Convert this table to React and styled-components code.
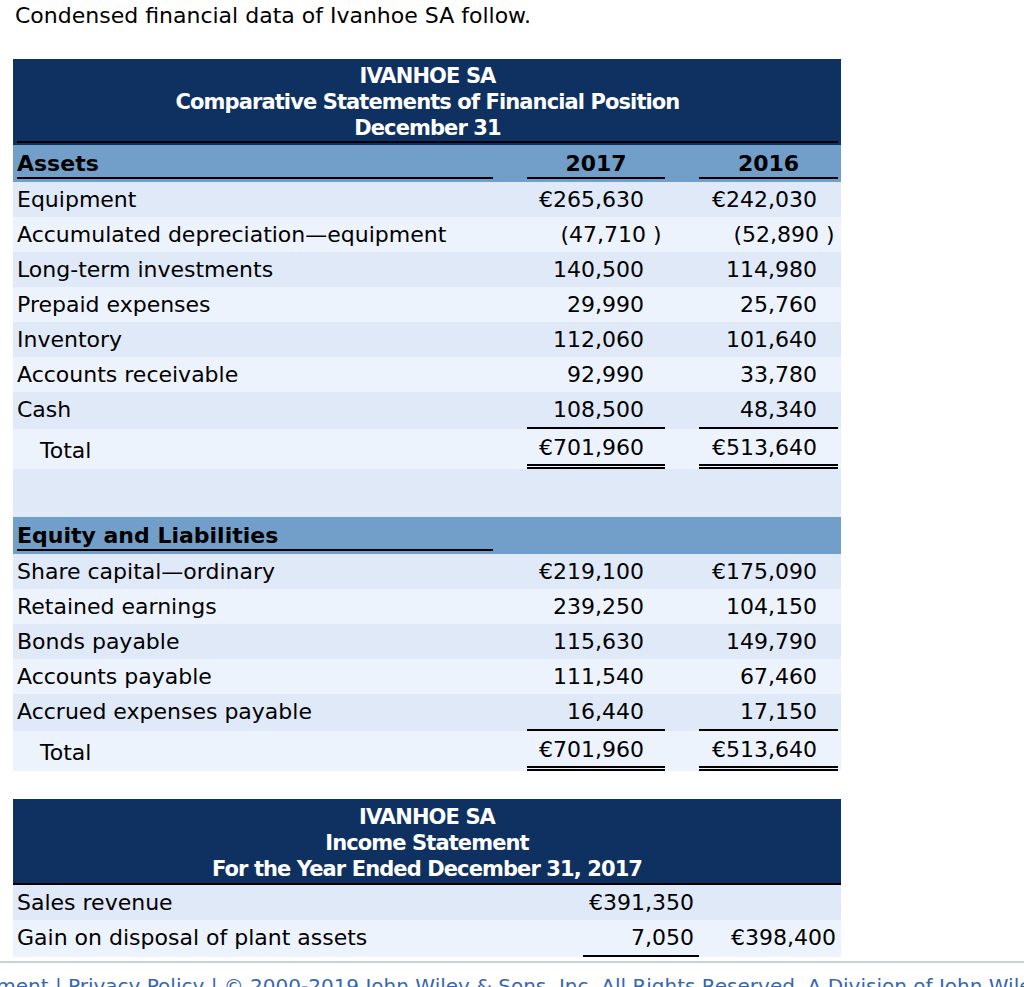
import React from 'react';
import styled, { createGlobalStyle } from 'styled-components';

const GlobalStyle = createGlobalStyle`
  body {
    margin: 0;
    background: #ffffff;
    color: #000000;
    font-family: 'DejaVu Sans', Verdana, sans-serif;
  }
`;

const Page = styled.div`
  padding: 3px 0 0 13px;
`;

const Title = styled.p`
  margin: 0 0 30px 2px;
  font-size: 22px;
  line-height: 26px;
`;

const Sheet = styled.div`
  width: 828px;
  display: flex;
  flex-direction: column;
  margin-bottom: ${(props) => props.$gap || 0}px;
`;

const Banner = styled.div`
  background: #0f3161;
  color: #ffffff;
  text-align: center;
  font-weight: bold;
  font-size: 21px;
  letter-spacing: -0.9px;
  line-height: 26px;
  padding: ${(props) => (props.$flush ? '5px 0 1px' : '4px 3px 2px 4px')};
  border-bottom: ${(props) => (props.$flush ? '2px solid #000' : 'none')};
`;

const BannerText = styled.div`
  border-bottom: ${(props) => (props.$ruled ? '2px solid #000' : 'none')};
`;

const Row = styled.div`
  display: grid;
  grid-template-columns: ${(props) => props.$cols || '476px 34px 138px 34px 139px'};
  padding: 0 3px 0 4px;
  font-size: 22px;
  background: ${(props) => (props.$tone === 'light' ? '#edf3fd' : '#e0e9f7')};
`;

const HeadRow = styled(Row)`
  background: #729fca;
  padding-bottom: 3px;
`;

const Spacer = styled.div`
  height: 48px;
  background: #e0e9f7;
`;

const HeadCell = styled.div`
  font-weight: bold;
  padding-top: 5px;
  line-height: 27px;
  text-align: ${(props) => (props.$center ? 'center' : 'left')};
  border-bottom: ${(props) => (props.$ruled ? '2px solid #000' : '2px solid transparent')};
`;

const Label = styled.div`
  line-height: 35px;
  padding-left: ${(props) => (props.$indent ? 23 : 0)}px;
  padding-top: ${(props) => (props.$total ? 4 : 0)}px;
  white-space: nowrap;
`;

const Value = styled.div`
  text-align: right;
  white-space: nowrap;
  padding-right: ${(props) => (props.$pad ?? 21)}px;
  padding-top: ${(props) => (props.$rule === 'double' ? 2 : 0)}px;
  line-height: ${(props) => (props.$rule === 'double' ? 33 : 35)}px;
  border-bottom: ${(props) =>
    props.$rule === 'double'
      ? '5px double #000'
      : props.$rule === 'single'
      ? '2px solid #000'
      : 'none'};
`;

const Paren = styled.span`
  margin-right: -0.8em;
`;

const Footer = styled.div`
  margin-top: 4px;
  border-top: 2px solid #c8cfd9;
  padding-top: 11px;
  display: flex;
  justify-content: center;
  overflow: hidden;
  white-space: nowrap;
  color: #3467b4;
  font-size: 20px;
`;

const assets = [
  ['Equipment', '€265,630', '€242,030'],
  ['Accumulated depreciation—equipment', '-47,710', '-52,890'],
  ['Long-term investments', '140,500', '114,980'],
  ['Prepaid expenses', '29,990', '25,760'],
  ['Inventory', '112,060', '101,640'],
  ['Accounts receivable', '92,990', '33,780'],
  ['Cash', '108,500', '48,340'],
];

const equity = [
  ['Share capital—ordinary', '€219,100', '€175,090'],
  ['Retained earnings', '239,250', '104,150'],
  ['Bonds payable', '115,630', '149,790'],
  ['Accounts payable', '111,540', '67,460'],
  ['Accrued expenses payable', '16,440', '17,150'],
];

const Amount = ({ value }) =>
  value.startsWith('-') ? (
    <>
      ({value.slice(1)}
      <Paren>&nbsp;)</Paren>
    </>
  ) : (
    value
  );

const DataRows = ({ rows, totals }) => (
  <>
    {rows.map((row, index) => {
      const last = index === rows.length - 1;
      return (
        <Row key={row[0]} $tone={index % 2 ? 'light' : 'dark'}>
          <Label>{row[0]}</Label>
          <span />
          <Value $rule={last ? 'single' : null}>
            <Amount value={row[1]} />
          </Value>
          <span />
          <Value $rule={last ? 'single' : null}>
            <Amount value={row[2]} />
          </Value>
        </Row>
      );
    })}
    <Row $tone="light">
      <Label $indent $total>
        Total
      </Label>
      <span />
      <Value $rule="double">{totals[0]}</Value>
      <span />
      <Value $rule="double">{totals[1]}</Value>
    </Row>
  </>
);

const INCOME_COLS = '566px 116px 139px';

export default function App() {
  return (
    <>
      <GlobalStyle />
      <Page>
        <Title>Condensed financial data of Ivanhoe SA follow.</Title>

        <Sheet $gap={28}>
          <Banner>
            <BannerText $ruled>
              IVANHOE SA
              <br />
              Comparative Statements of Financial Position
              <br />
              December 31
            </BannerText>
          </Banner>
          <HeadRow>
            <HeadCell $ruled>Assets</HeadCell>
            <span />
            <HeadCell $ruled $center>
              2017
            </HeadCell>
            <span />
            <HeadCell $ruled $center>
              2016
            </HeadCell>
          </HeadRow>
          <DataRows rows={assets} totals={['€701,960', '€513,640']} />
          <Spacer />
          <HeadRow>
            <HeadCell $ruled>Equity and Liabilities</HeadCell>
          </HeadRow>
          <DataRows rows={equity} totals={['€701,960', '€513,640']} />
        </Sheet>

        <Sheet>
          <Banner $flush>
            <BannerText>
              IVANHOE SA
              <br />
              Income Statement
              <br />
              For the Year Ended December 31, 2017
            </BannerText>
          </Banner>
          <Row $cols={INCOME_COLS}>
            <Label>Sales revenue</Label>
            <Value $pad={5}>€391,350</Value>
            <Value $pad={2}></Value>
          </Row>
          <Row $cols={INCOME_COLS} $tone="light">
            <Label>Gain on disposal of plant assets</Label>
            <Value $pad={5} $rule="single">
              7,050
            </Value>
            <Value $pad={2}>€398,400</Value>
          </Row>
        </Sheet>
      </Page>
      <Footer>
        License Agreement | Privacy Policy | © 2000-2019 John Wiley &amp; Sons, Inc. All Rights
        Reserved. A Division of John Wiley &amp; Sons, Inc.
      </Footer>
    </>
  );
}
